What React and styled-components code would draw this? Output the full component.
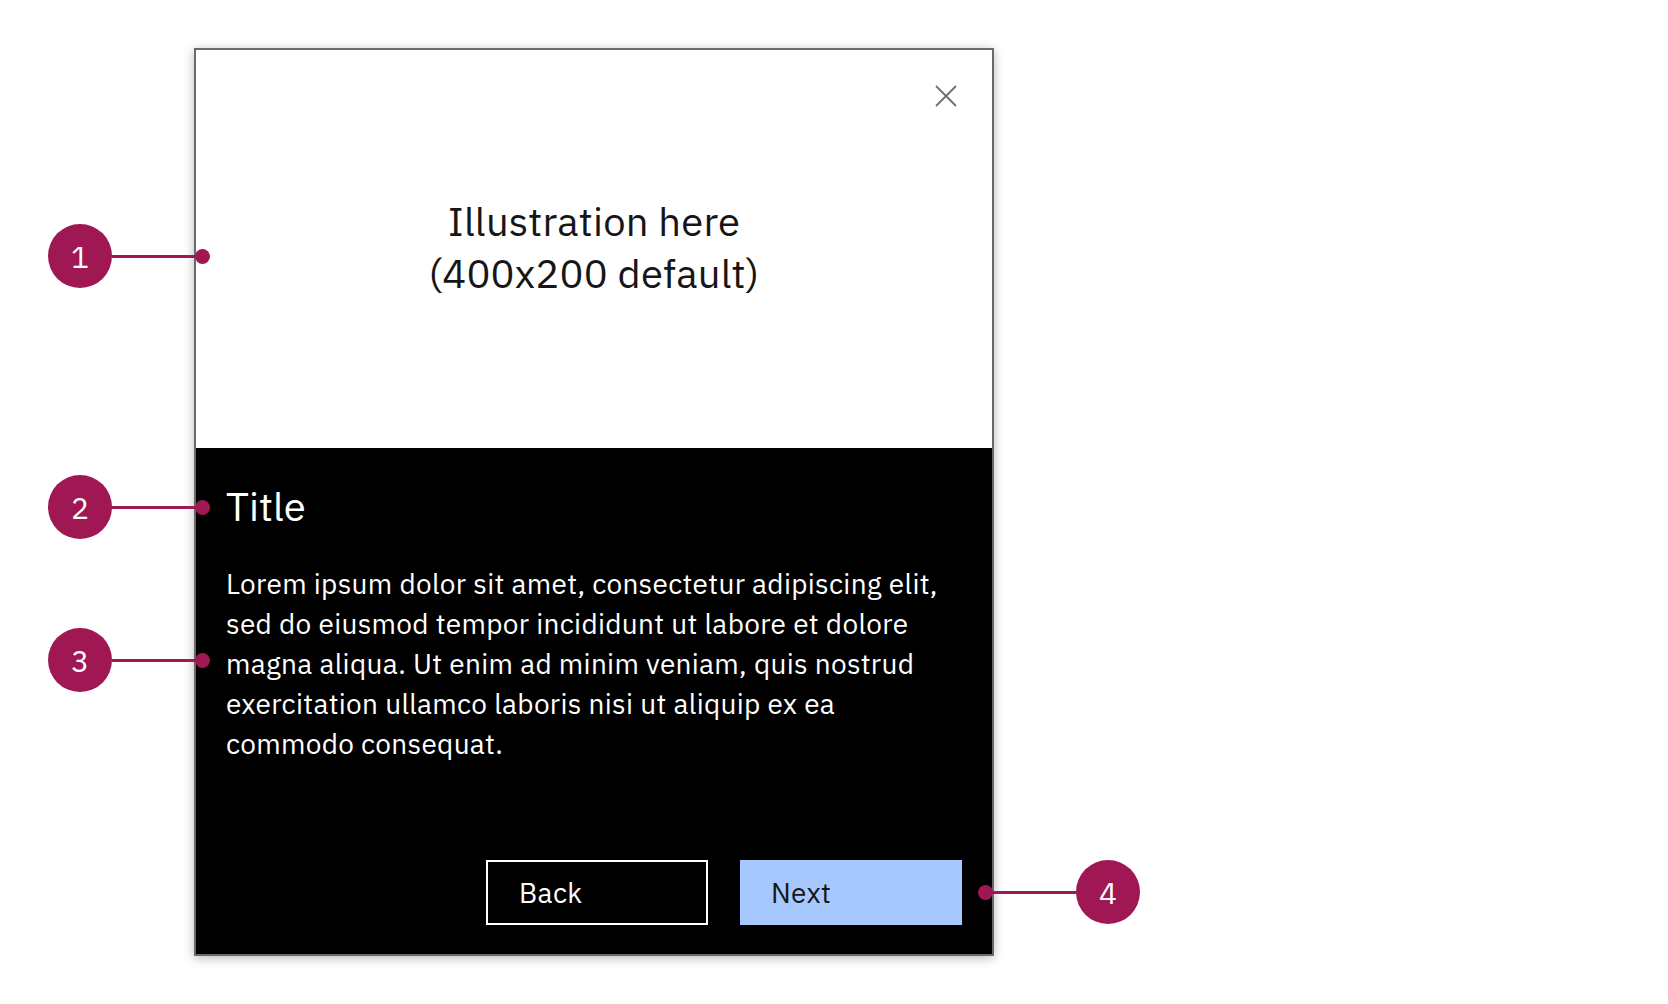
import React from 'react';
import styled, { createGlobalStyle } from 'styled-components';

const GlobalStyle = createGlobalStyle`
  body {
    margin: 0;
    background: #ffffff;
    font-family: "IBM Plex Sans", "Liberation Sans", Arial, sans-serif;
  }
`;

const Page = styled.div`
  position: relative;
  width: 1668px;
  height: 1004px;
  padding: 48px 0 0 194px;
  box-sizing: border-box;
  background: #ffffff;
`;

const Card = styled.div`
  position: relative;
  width: 800px;
  height: 908px;
  box-sizing: border-box;
  border: 2px solid #6a6a6a;
  box-shadow: 0 2px 10px rgba(0, 0, 0, 0.28);
  display: flex;
  flex-direction: column;
`;

const Illustration = styled.div`
  height: 398px;
  box-sizing: border-box;
  padding-bottom: 4px;
  background: #ffffff;
  display: flex;
  align-items: center;
  justify-content: center;
  text-align: center;
  color: #161616;
  font-size: 40px;
  line-height: 52px;
  letter-spacing: 0.2px;
`;

const CloseButton = styled.button`
  position: absolute;
  top: 34px;
  right: 34px;
  width: 24px;
  height: 24px;
  padding: 0;
  border: none;
  background: transparent;
  display: flex;
  align-items: center;
  justify-content: center;
  cursor: pointer;
`;

const Body = styled.div`
  flex: 1;
  background: #000000;
  color: #ffffff;
  padding: 32px 30px 29px 30px;
  display: flex;
  flex-direction: column;
`;

const Title = styled.h2`
  margin: 0 0 32px 0;
  font-size: 40px;
  line-height: 52px;
  font-weight: 400;
`;

const Text = styled.p`
  margin: 0;
  font-size: 28px;
  line-height: 40px;
  letter-spacing: 0.3px;
  max-width: 720px;
`;

const Actions = styled.div`
  margin-top: auto;
  display: flex;
  justify-content: flex-end;
  gap: 32px;
`;

const Button = styled.button`
  width: 222px;
  height: 65px;
  box-sizing: border-box;
  padding: 0 0 0 31px;
  text-align: left;
  font-family: inherit;
  font-size: 28px;
  letter-spacing: 0.32px;
  border: ${p => (p.primary ? 'none' : '2px solid #ffffff')};
  background: ${p => (p.primary ? '#a6c8ff' : 'transparent')};
  color: ${p => (p.primary ? '#161616' : '#ffffff')};
  cursor: pointer;
`;

const Callout = styled.div`
  position: absolute;
  left: ${p => p.left}px;
  top: ${p => p.top}px;
  display: flex;
  flex-direction: ${p => (p.reverse ? 'row-reverse' : 'row')};
  align-items: center;
`;

const Badge = styled.div`
  width: 64px;
  height: 64px;
  border-radius: 50%;
  background: #9f1853;
  color: #ffffff;
  font-size: 30px;
  display: flex;
  align-items: center;
  justify-content: center;
`;

const Leader = styled.div`
  width: ${p => p.length}px;
  height: 3px;
  background: #9f1853;
`;

const Dot = styled.div`
  width: 15px;
  height: 15px;
  border-radius: 50%;
  background: #9f1853;
  margin: ${p => (p.reverse ? '0 -2px 0 0' : '0 0 0 -2px')};
`;

const callouts = [
  { n: 1, left: 48, top: 224, length: 85 },
  { n: 2, left: 48, top: 475, length: 85 },
  { n: 3, left: 48, top: 628, length: 85 },
  { n: 4, left: 978, top: 860, length: 85, reverse: true },
];

function App() {
  return (
    <>
      <GlobalStyle />
      <Page>
        <Card>
          <Illustration>
            Illustration here
            <br />
            (400x200 default)
          </Illustration>
          <CloseButton aria-label="Close">
            <svg width="22" height="22" viewBox="0 0 22 22">
              <path d="M1 1 L21 21 M21 1 L1 21" stroke="#6f6f6f" strokeWidth="1.8" fill="none" />
            </svg>
          </CloseButton>
          <Body>
            <Title>Title</Title>
            <Text>
              Lorem ipsum dolor sit amet, consectetur adipiscing elit, sed do eiusmod tempor
              incididunt ut labore et dolore magna aliqua. Ut enim ad minim veniam, quis nostrud
              exercitation ullamco laboris nisi ut aliquip ex ea commodo consequat.
            </Text>
            <Actions>
              <Button>Back</Button>
              <Button primary>Next</Button>
            </Actions>
          </Body>
        </Card>

        {callouts.map(c => (
          <Callout key={c.n} left={c.left} top={c.top} reverse={c.reverse}>
            <Badge>{c.n}</Badge>
            <Leader length={c.length} />
            <Dot reverse={c.reverse} />
          </Callout>
        ))}
      </Page>
    </>
  );
}

export default App;
